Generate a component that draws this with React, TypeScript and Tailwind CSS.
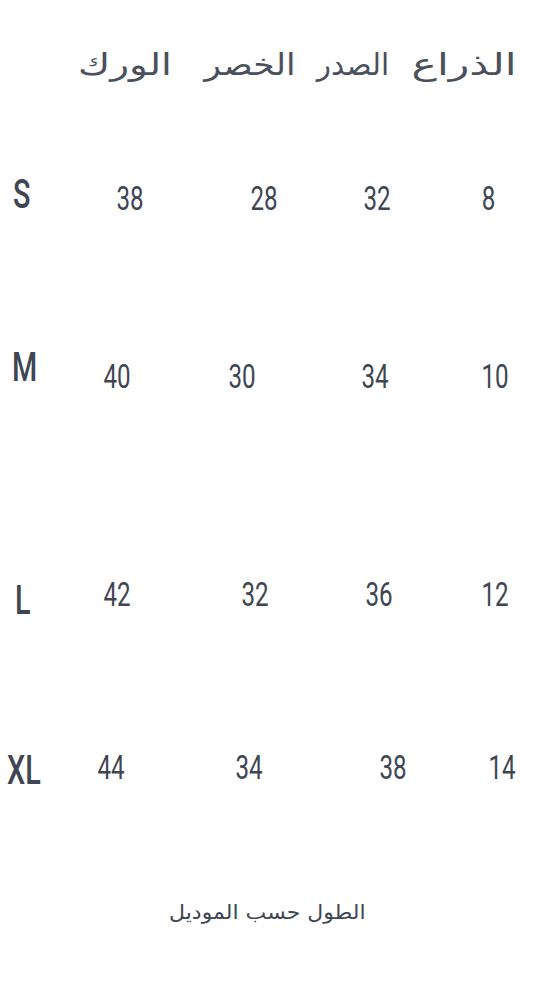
type Cell = { value: string; cls: string };

interface SizeRow {
  label: string;
  labelCls: string;
  rowCls: string;
  cells: Cell[];
}

// hand-tuned offsets, the reference table is not on a strict grid
const rows: SizeRow[] = [
  {
    label: "S",
    labelCls: "pl-[13px] -translate-y-[2px]",
    rowCls: "mt-[137px]",
    cells: [
      { value: "38", cls: "translate-x-[12px] translate-y-[1px]" },
      { value: "28", cls: "translate-x-[14px] translate-y-[1px]" },
      { value: "32", cls: "-translate-x-[3px] translate-y-[1px]" },
      { value: "8", cls: "-translate-x-[1px] translate-y-[1px]" },
    ],
  },
  {
    label: "M",
    labelCls: "pl-[12px] -translate-y-[4px]",
    rowCls: "mt-[135px]",
    cells: [
      { value: "40", cls: "-translate-x-[1px] translate-y-[4px]" },
      { value: "30", cls: "-translate-x-[8px] translate-y-[4px]" },
      { value: "34", cls: "-translate-x-[5px] translate-y-[4px]" },
      { value: "10", cls: "translate-x-[5px] translate-y-[4px]" },
    ],
  },
  {
    label: "L",
    labelCls: "pl-[15px] translate-y-[4px]",
    rowCls: "mt-[185px]",
    cells: [
      { value: "42", cls: "-translate-x-[1px] -translate-y-[3px]" },
      { value: "32", cls: "translate-x-[5px] -translate-y-[3px]" },
      { value: "36", cls: "-translate-x-[1px] -translate-y-[3px]" },
      { value: "12", cls: "translate-x-[5px] -translate-y-[3px]" },
    ],
  },
  {
    label: "XL",
    labelCls: "pl-[7px] translate-y-[1px]",
    rowCls: "mt-[133px]",
    cells: [
      { value: "44", cls: "-translate-x-[7px] -translate-y-[3px]" },
      { value: "34", cls: "-translate-x-[1px] -translate-y-[3px]" },
      { value: "38", cls: "translate-x-[13px] -translate-y-[3px]" },
      { value: "14", cls: "translate-x-[12px] -translate-y-[3px]" },
    ],
  },
];

// right to left: sleeve, chest, waist, hip
const headers = [
  { text: "الذراع", cls: "w-[102px] ml-[20px] scale-x-[1.42]" },
  { text: "الصدر", cls: "w-[80px] ml-[20px] scale-x-[0.98]" },
  { text: "الخصر", cls: "w-[86px] ml-[34px] scale-x-[1.15]" },
  { text: "الورك", cls: "w-[96px] scale-x-[1.3]" },
];

function SizeRowView({ row }: { row: SizeRow }) {
  return (
    <div
      className={`grid h-[40px] grid-cols-[44px_148px_116px_144px_76px] items-center ${row.rowCls}`}
    >
      <div className={`flex ${row.labelCls}`}>
        <span className="inline-block origin-left scale-x-[0.72] text-[40px] leading-none font-medium font-['Roboto',sans-serif]">
          {row.label}
        </span>
      </div>
      {row.cells.map((c, i) => (
        <div key={i} className={`flex justify-center ${c.cls}`}>
          <span className="inline-block scale-x-[0.71] text-[34px] leading-none font-['Roboto',sans-serif]">
            {c.value}
          </span>
        </div>
      ))}
    </div>
  );
}

export default function App() {
  return (
    <div className="flex h-[1000px] w-[535px] flex-col bg-white text-[#3e4553]">
      <div
        dir="rtl"
        className="flex h-[40px] translate-y-[45px] items-center pr-[20px] text-[30px] leading-none text-[#4a505c] font-['DejaVu_Sans',sans-serif]"
      >
        {headers.map((h) => (
          <span key={h.text} className={`inline-block shrink-0 text-center ${h.cls}`}>
            {h.text}
          </span>
        ))}
      </div>
      <div className="flex flex-col">
        {rows.map((r) => (
          <SizeRowView key={r.label} row={r} />
        ))}
      </div>
      <div className="mt-[107px] flex justify-center">
        <span
          dir="rtl"
          className="inline-block scale-x-[1.1] text-[20px] text-[#3e4553] font-['DejaVu_Sans',sans-serif]"
        >
          الطول حسب الموديل
        </span>
      </div>
    </div>
  );
}
